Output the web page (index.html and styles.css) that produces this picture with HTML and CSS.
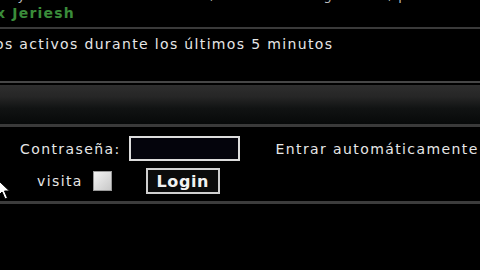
FILE: index.html
```html
<!DOCTYPE html>
<html lang="es">
<head>
    <meta charset="UTF-8">
    <title>Foro - Conectarse</title>
    <link rel="stylesheet" href="styles.css">
</head>
<body>
    <div class="stats">
        <p class="legend">Leyenda :: Administradores, Moderadores globales, p</p>
        <p class="online"><span class="user">x Jeriesh</span></p>
    </div>
    <div class="rule"></div>
    <p class="active">os activos durante los últimos 5 minutos</p>

    <div class="cat-bar"><div class="cat-inner"></div></div>

    <form class="login" action="#" method="post">
        <div class="row">
            <label class="pass-label">Contraseña:</label>
            <input type="password" class="field" name="password">
            <label class="auto-label">Entrar automáticamente</label>
        </div>
        <div class="row second">
            <label class="hide-label">visita</label>
            <span class="check"></span>
            <input type="submit" class="btn" value="Login">
        </div>
    </form>
    <div class="rule bottom"></div>

    <svg class="cursor" width="14" height="22" viewBox="0 0 14 22">
        <path d="M1 1 L1 17 L5 13 L8 20 L10.5 19 L7.5 12 L12.5 12 Z" fill="#fff" stroke="#000" stroke-width="1"/>
    </svg>
</body>
</html>
```

FILE: styles.css
```css
html, body {
    margin: 0;
    height: 100%;
    overflow: hidden;
}

body {
    background: #000;
    color: #e6e6e6;
    font-family: "DejaVu Sans", Verdana, sans-serif;
    font-size: 14px;
    position: relative;
}

p {
    margin: 0;
    line-height: 15px;
    white-space: nowrap;
    letter-spacing: 1.2px;
}

.legend {
    margin-top: -12px;
    font-size: 13px;
    color: #bdbdbd;
}

.online {
    margin-left: -4px;
    margin-top: 3px;
}

.user {
    color: #3a8c3a;
    font-weight: bold;
}

.rule {
    margin-top: 6px;
    height: 2px;
    background: #3a3a3a;
}

.active {
    margin-top: 8px;
    margin-left: -5px;
    letter-spacing: 1.35px;
}

.cat-bar {
    margin-top: 29px;
    border-top: 2px solid #474747;
    border-bottom: 3px solid #3a3a3a;
    padding-top: 2px;
}

.cat-inner {
    height: 39px;
    background: linear-gradient(#2e2e2e, #262626 30%, #111313 60%, #070909);
}

.login {
    padding-top: 9px;
}

.row {
    display: flex;
    align-items: center;
    letter-spacing: 1.4px;
}

.pass-label {
    margin-left: 20px;
    margin-right: 8px;
}

.field {
    width: 107px;
    height: 21px;
    margin: 0;
    padding: 0;
    border: 2px solid #dcdcdc;
    background: #04040c;
}

.auto-label {
    margin-left: 36px;
}

.second {
    margin-top: 7px;
}

.hide-label {
    margin-left: 37px;
}

.check {
    width: 17px;
    height: 18px;
    margin-left: 10px;
    border: 1px solid #999;
    background: linear-gradient(135deg, #f4f4f4, #c8c8c8);
}

.btn {
    margin-left: 34px;
    width: 74px;
    height: 26px;
    padding: 0;
    border: 2px solid #cfcfcf;
    background: #0c0c0c;
    color: #f2f2f2;
    font-family: "DejaVu Sans", Verdana, sans-serif;
    font-size: 16px;
    font-weight: bold;
    letter-spacing: 0.6px;
}

.rule.bottom {
    margin-top: 7px;
    height: 3px;
    background: #3c3c3c;
}

.cursor {
    position: absolute;
    left: -3px;
    top: 179px;
}
```
